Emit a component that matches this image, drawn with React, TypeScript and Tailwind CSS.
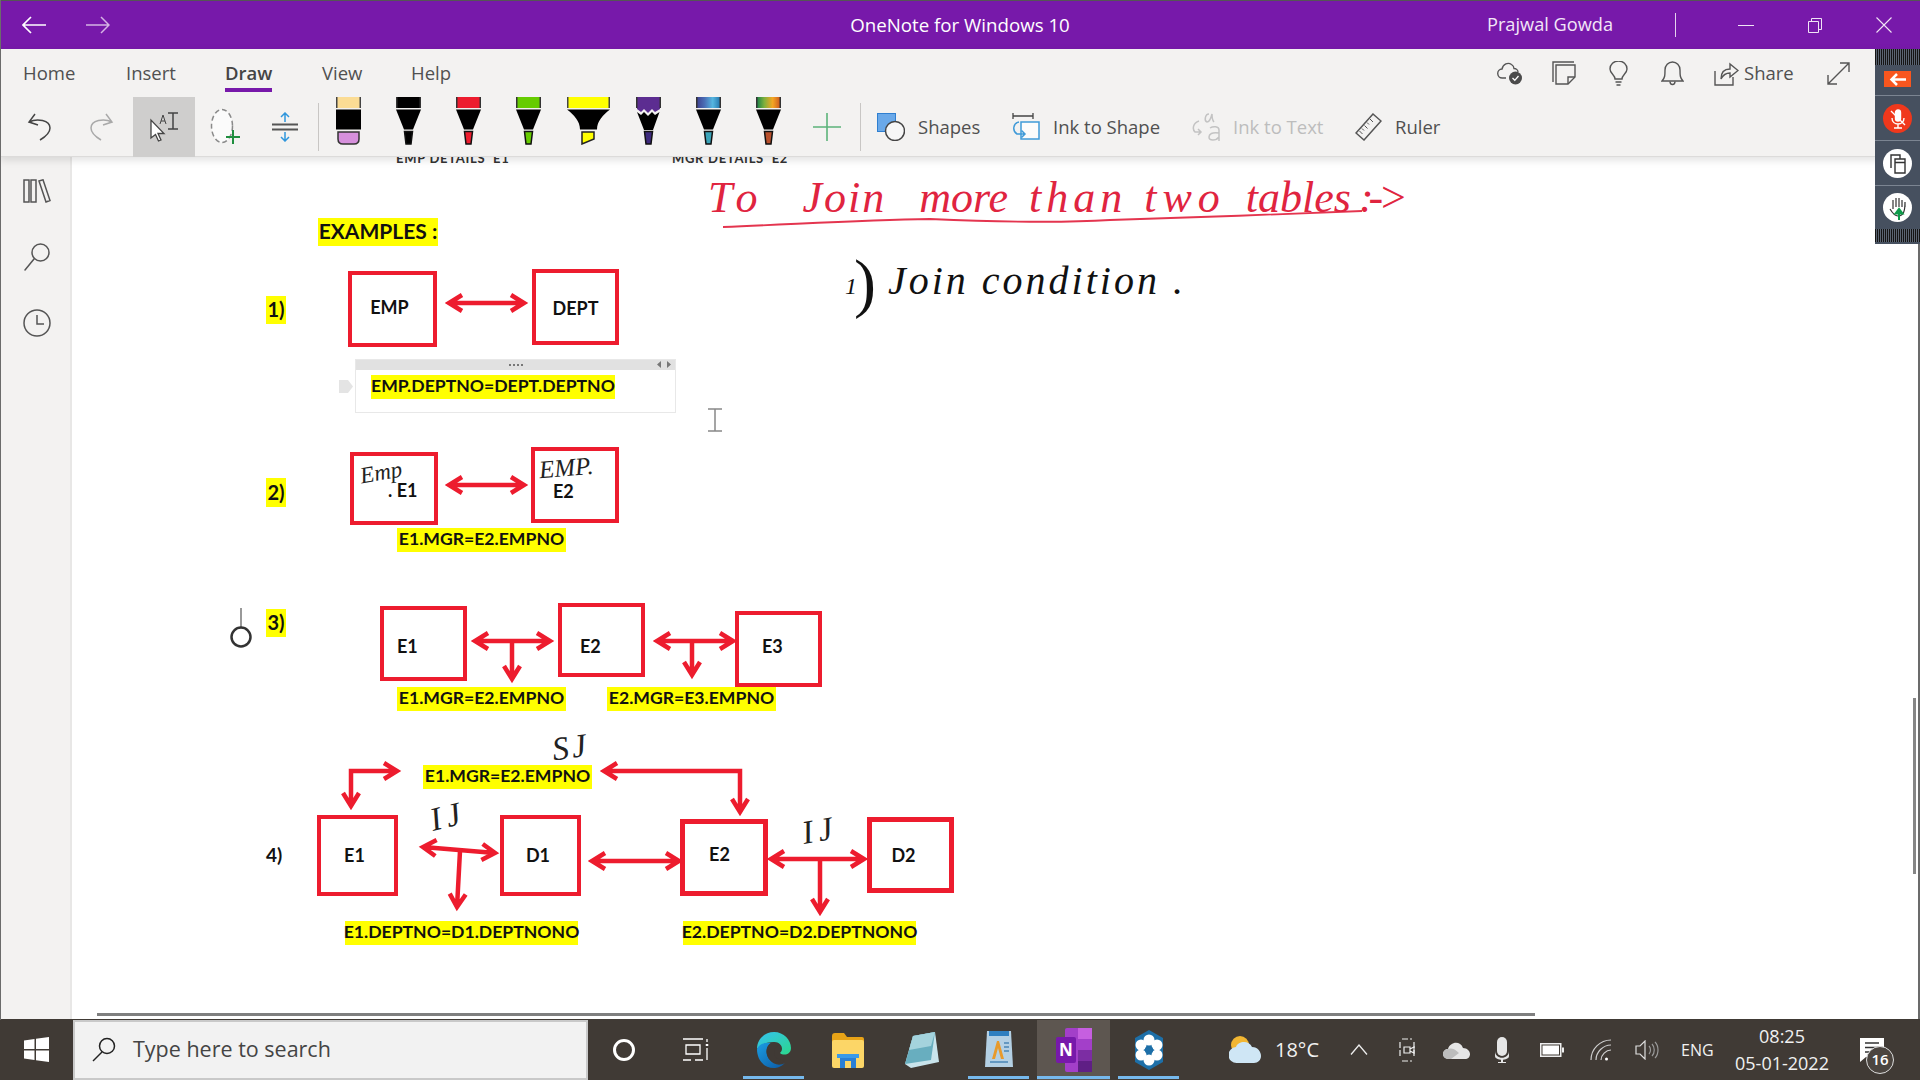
import React from 'react';

const RED = '#ed1c2e';

type Pt = [number, number];

// arrow head path at tip, pointing away from "from"
const head = (from: Pt, tip: Pt, size = 13, spread = 8) => {
  const dx = tip[0] - from[0];
  const dy = tip[1] - from[1];
  const len = Math.hypot(dx, dy) || 1;
  const ux = dx / len;
  const uy = dy / len;
  const bx = tip[0] - ux * size;
  const by = tip[1] - uy * size;
  return `M${bx - uy * spread} ${by + ux * spread}L${tip[0]} ${tip[1]}L${bx + uy * spread} ${by - ux * spread}`;
};

const both = (a: Pt, b: Pt) => `M${a[0]} ${a[1]}L${b[0]} ${b[1]}${head(b, a)}${head(a, b)}`;
const one = (a: Pt, b: Pt) => `M${a[0]} ${a[1]}L${b[0]} ${b[1]}${head(a, b)}`;

const ARROWS = [
  both([449, 303], [524, 303]),
  both([449, 485], [524, 485]),
  both([475, 641], [550, 641]),
  one([512, 641], [512, 679]),
  both([657, 641], [733, 641]),
  one([692, 641], [692, 675]),
  `M397 771L351 771L351 806${head([351, 771], [397, 771])}${head([351, 771], [351, 806])}`,
  `M604 771L740 771L740 812${head([740, 771], [604, 771])}${head([740, 771], [740, 812])}`,
  both([423, 847], [495, 853]),
  one([460, 851], [457, 907]),
  both([592, 861], [679, 861]),
  both([771, 859], [864, 859]),
  one([820, 859], [820, 912]),
];

const Box: React.FC<{ className: string; children?: React.ReactNode }> = ({ className, children }) => (
  <div className={`absolute flex whitespace-pre border-solid border-[#ed1c2e] font-['Lato',sans-serif] text-[18px] font-bold text-[#111] ${className}`}>
    {children}
  </div>
);

const Hl: React.FC<{ className: string; children: React.ReactNode }> = ({ className, children }) => (
  <div className={`absolute flex h-[24px] items-center justify-center whitespace-nowrap bg-[#ffff00] pb-[2px] font-['Lato',sans-serif] text-[17.6px] font-bold text-[#111] ${className}`}>
    {children}
  </div>
);

const Ink: React.FC<{ className: string; children: React.ReactNode }> = ({ className, children }) => (
  <div className={`absolute whitespace-nowrap font-['Liberation_Serif',serif] italic leading-none ${className}`}>{children}</div>
);

const Pen: React.FC<{ top: string; tip: string; id?: string; stops?: string[]; jag?: boolean }> = ({ top, tip, id, stops, jag }) => (
  <svg width="25" height="48" viewBox="0 0 25 48">
    {id && stops && (
      <defs>
        <linearGradient id={id}>
          {stops.map((c, i) => (
            <stop key={c} offset={i / (stops.length - 1)} stopColor={c} />
          ))}
        </linearGradient>
      </defs>
    )}
    <rect x="0" y="0" width="25" height="11" fill={id ? `url(#${id})` : top} />
    <rect x="0" y="0" width="1.5" height="11" fill="#333" />
    <rect x="23.5" y="0" width="1.5" height="11" fill="#333" />
    {jag ? (
      <>
        <path d="M1 11L1 12L5 15L8 12L12 16L16 12L19 15L24 12L24 11Z" fill={top} />
        <path d="M1 15L5 18L8 15L12 19L16 15L19 18L23.5 15L17 33L8 33Z" fill="#000" />
      </>
    ) : (
      <path d="M0 12.5L25 12.5L17 32.500L8 32.500Z" fill="#000" />
    )}
    <path d="M8.500 34.500L16.500 34.500L15 47L10 47Z" fill={tip} stroke="#111" strokeWidth="1.500" />
  </svg>
);

const ToolSlot: React.FC<{ children: React.ReactNode; className?: string }> = ({ children, className }) => (
  <div className={`flex h-[60px] items-center justify-center ${className ?? 'w-[62px]'}`}>{children}</div>
);

const ToolLabel: React.FC<{ icon: React.ReactNode; label: string; className: string; muted?: boolean }> = ({ icon, label, className, muted }) => (
  <div className={`flex h-[60px] items-center ${className}`}>
    {icon}
    <span className={`whitespace-nowrap text-[18.5px] ${muted ? 'text-[#bdbdbd]' : 'text-[#505050]'}`}>{label}</span>
  </div>
);

const Slot: React.FC<{ className: string; active?: boolean; children: React.ReactNode }> = ({ className, active, children }) => (
  <div className={`relative flex h-[60px] items-center justify-center ${className}`}>
    {children}
    {active && <div className="absolute bottom-[1px] left-0 h-[3px] w-full bg-[#76b9ed]" />}
  </div>
);

export default function App() {
  return (
    <div className="relative flex h-[1080px] w-[1920px] flex-col overflow-hidden bg-white font-['Open_Sans',sans-serif]">
      <div className="absolute left-0 top-0 z-30 h-[1020px] w-px bg-[#6b6b6b]" />

      {/* Title bar */}
      <div className="flex h-[49px] shrink-0 items-center border-t border-[#555] bg-[#7719aa] pl-[22px] text-white">
        <svg width="24" height="20" viewBox="0 0 24 20" fill="none" stroke="#fff" strokeWidth="1.700">
          <path d="M24 10H1M9 2L1 10L9 18" />
        </svg>
        <svg className="ml-[40px]" width="24" height="20" viewBox="0 0 24 20" fill="none" stroke="#d5b4e4" strokeWidth="1.500">
          <path d="M0 10H23M15 2L23 10L15 18" />
        </svg>
        <div className="ml-[740px] w-[220px] whitespace-nowrap text-center text-[18.7px]">OneNote for Windows 10</div>
        <div className="ml-[417px] w-[126px] whitespace-nowrap text-center text-[18.2px] text-[#f2e6f7]">Prajwal Gowda</div>
        <div className="ml-[62px] h-[24px] w-px bg-[#e5d3ee]" />
        <div className="ml-[62px] h-px w-[16px] bg-[#f0e4f5]" />
        <svg className="ml-[54px]" width="14" height="15" viewBox="0 0 14 15" fill="none" stroke="#f0e4f5">
          <path d="M0.500 3.500H10.500V14.500H0.500ZM3.500 3.500V0.500H13.500V11.500H10.500" />
        </svg>
        <svg className="ml-[54px]" width="16" height="16" viewBox="0 0 16 16" fill="none" stroke="#f0e4f5" strokeWidth="1.100">
          <path d="M0.500 0.500L15.500 15.500M15.500 0.500L0.500 15.500" />
        </svg>
      </div>

      {/* Ribbon */}
      <div className="relative z-20 h-[108px] shrink-0 border-b border-[#dcdbda] bg-[#f3f2f1] shadow-[0_3px_8px_rgba(0,0,0,0.12)]">
        <div className="flex h-[48px] items-center text-[18.5px] text-[#505050]">
          <span className="ml-[23px] w-[52px]">Home</span>
          <span className="ml-[51px] w-[48px]">Insert</span>
          <span className="relative ml-[51px] w-[48px] font-semibold text-[#444]">
            Draw
            <span className="absolute left-0 top-[29px] h-[4px] w-[47px] bg-[#7719aa]" />
          </span>
          <span className="ml-[49px] w-[41px]">View</span>
          <span className="ml-[48px] w-[40px]">Help</span>
          <div className="ml-auto flex items-center">
            <svg width="26" height="24" viewBox="0 0 26 24" fill="none" stroke="#555" strokeWidth="1.400">
              <path d="M9 17H5.500A4.500 4.500 0 0 1 5 8C6 3 11 1 14.500 3.500C16 4.500 17 6 17 7.500C19 7.500 21 9 21 11" />
              <circle cx="18.500" cy="17" r="6.500" fill="#4b4b4b" stroke="none" />
              <path d="M15.500 17L17.800 19.300L21.500 15" stroke="#fff" strokeWidth="1.300" />
            </svg>
            <svg className="ml-[29px]" width="24" height="24" viewBox="0 0 24 24" fill="none" stroke="#555" strokeWidth="1.400">
              <path d="M1 21V1H22" />
              <path d="M4 4H23V16L16 23H4Z" />
              <path d="M23 16H16V23" />
            </svg>
            <svg className="ml-[33px]" width="19" height="25" viewBox="0 0 19 25" fill="none" stroke="#555" strokeWidth="1.400">
              <path d="M6 18C6 14 1 12.500 1 8A8.500 8 0 0 1 18 8C18 12.500 13 14 13 18Z" />
              <path d="M6.500 21H12.500M7.500 24H11.500" />
            </svg>
            <svg className="ml-[33px]" width="23" height="25" viewBox="0 0 23 25" fill="none" stroke="#555" strokeWidth="1.400">
              <path d="M1 20C4 17 4 14 4 9A7.500 8 0 0 1 19 9C19 14 19 17 22 20Z" />
              <path d="M9 20.500A2.500 3 0 0 0 14 20.500" />
            </svg>
            <svg className="ml-[30px]" width="25" height="25" viewBox="0 0 25 25" fill="none" stroke="#555" strokeWidth="1.400">
              <path d="M1 10V24H19V16" />
              <path d="M7 18C7 11 11 8 16 8V3L24 9.500L16 16V12C12 12 9 14 7 18Z" />
            </svg>
            <span className="ml-[5px] w-[48px] text-[18.5px]">Share</span>
            <svg className="ml-[35px] mr-[70px]" width="23" height="23" viewBox="0 0 23 23" fill="none" stroke="#555" strokeWidth="1.400">
              <path d="M1 22L22 1M13 1H22V10M1 13V22H10" />
            </svg>
          </div>
        </div>

        <div className="flex h-[60px] items-start pl-[8px]">
          <ToolSlot>
            <svg width="25" height="28" viewBox="0 0 25 28" fill="none" stroke="#444" strokeWidth="1.500">
              <path d="M8 1L2 9L11 12M2 9C10 5 23 7 23 15C23 20 18 24 13 27" />
            </svg>
          </ToolSlot>
          <ToolSlot>
            <svg width="25" height="28" viewBox="0 0 25 28" fill="none" stroke="#a9a9a9" strokeWidth="1.500">
              <path d="M17 1L23 9L14 12M23 9C15 5 2 7 2 15C2 20 7 24 12 27" />
            </svg>
          </ToolSlot>
          <ToolSlot className="ml-px w-[62px] bg-[#cfcecd]">
            <svg width="32" height="30" viewBox="0 0 32 30" fill="none" stroke="#444" strokeWidth="1.300">
              <path d="M3 8V26L7.500 22.500L10.500 29L13 28L10 21.500H16Z" fill="#fff" />
              <path d="M12 12L15 3L18 12M13 9H17" strokeWidth="1" />
              <path d="M20 1H30M25 1V17M20 17H30" strokeWidth="1.500" />
            </svg>
          </ToolSlot>
          <ToolSlot className="w-[60px]">
            <svg width="30" height="38" viewBox="0 0 30 38" fill="none">
              <ellipse cx="12" cy="18" rx="10.500" ry="16.500" stroke="#8a8a8a" strokeWidth="1.500" strokeDasharray="5 3" fill="#fbfbfb" />
              <path d="M23 22V36M16 29H30" stroke="#1e8e3e" strokeWidth="2" />
            </svg>
          </ToolSlot>
          <ToolSlot className="w-[60px]">
            <svg width="28" height="30" viewBox="0 0 28 30" fill="none">
              <path d="M1 12.500H27M1 17.500H27" stroke="#555" strokeWidth="2" />
              <path d="M14 10V1M10 5L14 1L18 5M14 20V29M10 25L14 29L18 25" stroke="#2f96dc" strokeWidth="1.500" />
            </svg>
          </ToolSlot>

          <div className="ml-[3px] mt-[6px] h-[48px] w-px bg-[#c8c6c4]" />
          <div className="-ml-px flex w-[480px]">
            <ToolSlot className="w-[60px] !items-start">
              <svg width="25" height="48" viewBox="0 0 25 48">
                <rect width="25" height="11" fill="#fbdc94" />
                <rect width="1.500" height="11" fill="#444" />
                <rect x="23.500" width="1.500" height="11" fill="#444" />
                <rect y="12.500" width="25" height="20" fill="#000" />
                <path d="M2 35H23V42Q23 47 18 47H7Q2 47 2 42Z" fill="#d690dc" stroke="#333" strokeWidth="1.500" />
              </svg>
            </ToolSlot>
            <ToolSlot className="w-[60px] !items-start"><Pen top="#000" tip="#000" /></ToolSlot>
            <ToolSlot className="w-[60px] !items-start"><Pen top="#ed1c2e" tip="#ed1c2e" /></ToolSlot>
            <ToolSlot className="w-[60px] !items-start"><Pen top="#66cc00" tip="#66cc00" /></ToolSlot>
            <ToolSlot className="w-[60px] !items-start">
              <svg width="43" height="48" viewBox="0 0 43 48">
                <rect width="43" height="11" fill="#ffff00" />
                <rect width="1.500" height="11" fill="#444" />
                <rect x="41.500" width="1.500" height="11" fill="#444" />
                <path d="M0 12.500H43C36 18 30 24 30 32.500H13C13 24 7 18 0 12.500Z" fill="#000" />
                <path d="M15 35H27V42L15 47Z" fill="#ffff00" stroke="#222" strokeWidth="1.500" />
              </svg>
            </ToolSlot>
            <ToolSlot className="w-[60px] !items-start"><Pen top="#5c2d91" tip="#3d2a7d" jag /></ToolSlot>
            <ToolSlot className="w-[60px] !items-start">
              <Pen top="" tip="#3aa3b8" id="galaxy" stops={['#3c3c8c', '#4a6cb4', '#55b6e0', '#1f6fa8']} />
            </ToolSlot>
            <ToolSlot className="w-[60px] !items-start">
              <Pen top="" tip="#b8502c" id="rainbow" stops={['#0c7c4a', '#7fb03c', '#f5a623', '#c8501e']} />
            </ToolSlot>
          </div>
          <ToolSlot className="w-[58px]">
            <svg width="28" height="28" viewBox="0 0 28 28" stroke="#5cb37a" strokeWidth="1.600">
              <path d="M14 0V28M0 14H28" />
            </svg>
          </ToolSlot>
          <div className="ml-[4px] mt-[6px] h-[48px] w-px bg-[#c8c6c4]" />

          <ToolLabel
            className="ml-[16px] w-[135px]"
            label="Shapes"
            icon={
              <svg className="mr-[13px]" width="28" height="28" viewBox="0 0 28 28">
                <rect x="0.500" y="0.500" width="18" height="18" fill="#6aa9e9" stroke="#2f7fd0" />
                <circle cx="18" cy="18" r="9.500" fill="#f7f7f7" stroke="#444" strokeWidth="1.500" />
              </svg>
            }
          />
          <ToolLabel
            className="w-[180px]"
            label="Ink to Shape"
            icon={
              <svg className="mr-[13px]" width="28" height="28" viewBox="0 0 28 28" fill="none">
                <path d="M1 0V6M1 3H21M21 0V6" stroke="#444" strokeWidth="1.300" />
                <rect x="9" y="9" width="18" height="17" fill="#fbfbfb" stroke="#3f9ad8" strokeWidth="1.500" />
                <path d="M7 9C1 10 0 18 5 21H13M9.500 17.500L13 21L9.500 24.500" stroke="#3f9ad8" strokeWidth="1.500" />
              </svg>
            }
          />
          <ToolLabel
            muted
            className="w-[163px]"
            label="Ink to Text"
            icon={
              <svg className="mr-[11px]" width="30" height="30" viewBox="0 0 30 30" fill="none" stroke="#c3c3c3" strokeWidth="1.500">
                <path d="M17 2C13 2 12 9 15 10C17 10 19 6 20 2C20 5 20 8 22 10" />
                <path d="M7 9C1 11 0 17 3 20H9M6 17L9 20L6 23" />
                <path d="M18 16C21 14 27 14 27 18V29M27 21C20 20 17 22 17 25C17 29 24 29 27 25" />
              </svg>
            }
          />
          <ToolLabel
            className="w-[100px]"
            label="Ruler"
            icon={
              <svg className="mr-[13px]" width="27" height="28" viewBox="0 0 27 28" fill="none" stroke="#555" strokeWidth="1.500">
                <path d="M18 1L26 8L9 27L1 20Z" />
                <path d="M15 6L18 9M12 9.500L14 11.500M9.500 12.500L12.500 15.500M7 15.500L9 17.500M4.500 18L7.500 21" strokeWidth="1" />
              </svg>
            }
          />
        </div>
      </div>

      {/* Body */}
      <div className="flex min-h-0 flex-1">
        <div className="flex w-[72px] shrink-0 flex-col items-center border-r-2 border-[#e8e7e6] bg-[#f3f2f1] pl-[3px] pt-[22px]">
          <svg width="28" height="24" viewBox="0 0 28 24" fill="none" stroke="#555" strokeWidth="1.500">
            <path d="M1 1H6V23H1ZM8 1H13V23H8ZM16 2L20 0.800L27 21.500L23 23Z" />
          </svg>
          <svg className="mt-[40px]" width="26" height="28" viewBox="0 0 26 28" fill="none" stroke="#555" strokeWidth="1.500">
            <circle cx="16.500" cy="9.500" r="8.500" />
            <path d="M10 16L1 27" strokeLinecap="round" />
          </svg>
          <svg className="mt-[38px]" width="28" height="28" viewBox="0 0 28 28" fill="none" stroke="#555" strokeWidth="1.500">
            <circle cx="14" cy="14" r="13" />
            <path d="M14 6V15H21" />
          </svg>
        </div>

        {/* Notebook canvas */}
        <div className="relative flex-1 overflow-hidden bg-white">
          <div className="absolute left-[324px] top-[-8px] whitespace-pre font-['Lato',sans-serif] text-[13px] font-bold tracking-[0.7px] text-[#333]">EMP DETAILS  E1</div>
          <div className="absolute left-[600px] top-[-8px] whitespace-pre font-['Lato',sans-serif] text-[13px] font-bold tracking-[0.7px] text-[#333]">MGR DETAILS  E2</div>

          <svg className="absolute inset-0 h-full w-full" viewBox="72 157 1848 862" fill="none">
            {ARROWS.map((d) => (
              <path key={d} d={d} stroke={RED} strokeWidth="4.500" />
            ))}
            <path d="M723 227C800 224 860 220 930 219C1000 222 1060 223 1110 220C1180 218 1290 214 1362 211" stroke="#e4354f" strokeWidth="1.800" />
            <path d="M241 608V627" stroke="#777" strokeWidth="1.500" />
            <circle cx="241" cy="637" r="9.500" stroke="#333" strokeWidth="2.500" />
            <path d="M708 409H722M708 431H722M715 409V431" stroke="#888" strokeWidth="1.500" />
            <path d="M339 380H348L353 386.500L348 393H339Z" fill="#e4e4e4" />
          </svg>

          <Hl className="left-[246px] top-[61px] !h-[28px] w-[120px] !text-[21px]">EXAMPLES :</Hl>
          <Hl className="left-[194px] top-[139px] !h-[28px] w-[20px] !text-[20px]">1)</Hl>
          <Hl className="left-[194px] top-[321px] !h-[29px] w-[20px] !text-[20px]">2)</Hl>
          <Hl className="left-[194px] top-[452px] !h-[28px] w-[20px] !text-[20px]">3)</Hl>
          <div className="absolute left-[194px] top-[684px] font-['Lato',sans-serif] text-[19px] font-bold leading-[28px] text-[#111]">4)</div>

          <Box className="left-[276px] top-[114px] h-[76px] w-[89px] items-center justify-center border-[4px] pb-[3px] pr-[6px]">EMP</Box>
          <Box className="left-[460px] top-[112px] h-[76px] w-[87px] items-center justify-center border-[4px] pt-[2px]">DEPT</Box>

          <div className="absolute left-[283px] top-[202px] h-[54px] w-[321px] border border-[#e8e8e8]">
            <div className="flex h-[10px] items-center justify-center bg-[#e1e1e1]">
              <div className="h-[2px] w-[14px] bg-[repeating-linear-gradient(90deg,#777_0,#777_2px,transparent_2px,transparent_4px)]" />
            </div>
            <svg className="absolute right-[4px] top-[1px]" width="14" height="7" viewBox="0 0 14 7" fill="#777">
              <path d="M4 0V7L0 3.500ZM10 0V7L14 3.500Z" />
            </svg>
          </div>
          <Hl className="left-[299px] top-[218px] w-[244px]">EMP.DEPTNO=DEPT.DEPTNO</Hl>

          <Box className="left-[278px] top-[295px] h-[73px] w-[88px] border-[4px] pl-[34px] pt-[21px]">. E1</Box>
          <Box className="left-[459px] top-[290px] h-[76px] w-[88px] border-[4px] pl-[18px] pt-[27px]">E2</Box>
          <Ink className="left-[288px] top-[304px] rotate-[-10deg] text-[23px] text-[#222]">Emp</Ink>
          <Ink className="left-[467px] top-[298px] rotate-[-5deg] text-[25px] text-[#222]">EMP.</Ink>
          <Hl className="left-[325px] top-[371px] w-[169px]">E1.MGR=E2.EMPNO</Hl>

          <Box className="left-[308px] top-[449px] h-[75px] w-[87px] border-[4px] pl-[13px] pt-[23px]">E1</Box>
          <Box className="left-[486px] top-[446px] h-[74px] w-[87px] border-[4px] pl-[18px] pt-[26px]">E2</Box>
          <Box className="left-[663px] top-[454px] h-[76px] w-[87px] border-[4px] pl-[23px] pt-[18px]">E3</Box>
          <Hl className="left-[325px] top-[530px] w-[169px]">E1.MGR=E2.EMPNO</Hl>
          <Hl className="left-[535px] top-[530px] w-[169px]">E2.MGR=E3.EMPNO</Hl>

          <Ink className="left-[480px] top-[574px] rotate-[-8deg] text-[33px] tracking-[3px] text-[#222]">SJ</Ink>
          <Hl className="left-[351px] top-[608px] w-[169px]">E1.MGR=E2.EMPNO</Hl>
          <Box className="left-[245px] top-[658px] h-[81px] w-[81px] items-center justify-center border-[4px] pr-[6px]">E1</Box>
          <Box className="left-[428px] top-[658px] h-[81px] w-[81px] items-center justify-center border-[4px] pr-[5px]">D1</Box>
          <Box className="left-[608px] top-[662px] h-[77px] w-[88px] items-center justify-center border-[5px] pb-[6px] pr-[9px]">E2</Box>
          <Box className="left-[795px] top-[660px] h-[76px] w-[87px] items-center justify-center border-[5px] pr-[14px]">D2</Box>
          <Ink className="left-[358px] top-[643px] rotate-[-14deg] text-[33px] tracking-[5px] text-[#222]">IJ</Ink>
          <Ink className="left-[730px] top-[657px] rotate-[-10deg] text-[33px] tracking-[5px] text-[#222]">IJ</Ink>
          <Hl className="left-[273px] top-[764px] w-[233px]">E1.DEPTNO=D1.DEPTNONO</Hl>
          <Hl className="left-[611px] top-[764px] w-[233px]">E2.DEPTNO=D2.DEPTNONO</Hl>

          {/* Handwritten notes */}
          <Ink className="left-[636px] top-[19px] flex text-[44px] text-[#e0243f]">
            <span className="tracking-[7px]">To</span>
            <span className="ml-[38px] tracking-[2px]">Join</span>
            <span className="ml-[33px]">more</span>
            <span className="ml-[21px] tracking-[5px]">than</span>
            <span className="ml-[17px] tracking-[6px]">two</span>
            <span className="ml-[20px]">tables</span>
            <span className="ml-[8px] tracking-[-5px]">:-&gt;</span>
          </Ink>
          <Ink className="left-[773px] top-[117px] text-[24px] text-[#111]">1</Ink>
          <div className="absolute left-[782px] top-[93px] font-['Liberation_Serif',serif] text-[66px] font-light leading-none text-[#111]">)</div>
          <Ink className="left-[816px] top-[104px] text-[40px] tracking-[3px] text-[#111]">Join condition .</Ink>

          {/* Page scrollbars */}
          <div className="absolute left-[25px] top-[856px] h-[3px] w-[1438px] bg-[#7f7f7f]" />
          <div className="absolute left-[1841px] top-[541px] h-[176px] w-[3px] bg-[#868686]" />
          <div className="absolute right-0 top-0 h-full w-[2px] bg-[#6b6b6b]" />
        </div>
      </div>

      {/* Recorder widget */}
      <div className="absolute right-0 top-[49px] z-30 flex h-[195px] w-[45px] flex-col items-center bg-[#46505f]">
        <div className="h-[16px] w-full shrink-0 bg-[repeating-linear-gradient(90deg,#141414_0,#141414_1px,#5a6472_1px,#5a6472_2px)]" />
        <div className="mt-[6px] flex h-[16px] w-[27px] items-center justify-center bg-[#f8561e]">
          <svg width="17" height="13" viewBox="0 0 17 13" fill="none" stroke="#fff" strokeWidth="2.500">
            <path d="M17 6.500H3M8 1L2.500 6.500L8 12" />
          </svg>
        </div>
        <div className="mt-[8px] h-px w-full bg-[#7c8592]" />
        <div className="mt-[8px] flex h-[29px] w-[29px] items-center justify-center rounded-full bg-[#f0381c]">
          <svg width="16" height="20" viewBox="0 0 16 20" fill="none" stroke="#fff" strokeWidth="1.400">
            <rect x="5.500" y="1" width="5" height="11" rx="2.500" fill="#fff" />
            <path d="M2 9C2 17 14 17 14 9M8 15V19M4 19H12M1 2L15 16" />
          </svg>
        </div>
        <div className="mt-[7px] h-px w-full bg-[#7c8592]" />
        <div className="mt-[8px] flex h-[29px] w-[29px] items-center justify-center rounded-full bg-white">
          <svg width="16" height="20" viewBox="0 0 16 20" fill="none" stroke="#333" strokeWidth="1.400">
            <path d="M1 14V1H10V5M5 5H15V19H5ZM5 8.500H15" />
          </svg>
        </div>
        <div className="mt-[7px] h-px w-full bg-[#7c8592]" />
        <div className="mt-[7px] flex h-[29px] w-[29px] items-center justify-center rounded-full bg-white">
          <svg width="18" height="24" viewBox="0 0 18 24" fill="none">
            <path d="M4 13V4M7 11V2M10 11V2M13 11V4M16 11V6C16 14 15 20 9 20C6 20 4 18 1 13" stroke="#333" strokeWidth="1.200" />
            <path d="M10 24V15M6.500 17.500L10 13L13.500 17.500Z" stroke="#0d9b4a" strokeWidth="2" fill="#0d9b4a" />
          </svg>
        </div>
        <div className="mt-[7px] h-[13px] w-full shrink-0 bg-[repeating-linear-gradient(90deg,#141414_0,#141414_1px,#5a6472_1px,#5a6472_2px)]" />
      </div>

      {/* Taskbar */}
      <div className="flex h-[61px] shrink-0 items-center bg-[#403a35] text-[#f1f1f1]">
        <div className="flex h-[60px] w-[73px] items-center justify-center">
          <svg width="25" height="25" viewBox="0 0 25 25" fill="#fff">
            <path d="M0 3.500L10.500 2V12H0ZM12 1.800L25 0V12H12ZM0 13.500H10.500V23L0 21.500ZM12 13.500H25V25L12 23.200Z" />
          </svg>
        </div>
        <div className="flex h-[60px] w-[515px] items-center border-2 border-[#c9c9c9] bg-[#f2f2f2] pl-[17px] text-[21.5px] text-[#444]">
          <svg width="24" height="25" viewBox="0 0 24 25" fill="none" stroke="#222" strokeWidth="1.500">
            <circle cx="15" cy="9" r="7.500" />
            <path d="M10 15L1 24" />
          </svg>
          <span className="ml-[17px] whitespace-nowrap">Type here to search</span>
        </div>

        <Slot className="w-[72px]">
          <div className="h-[22px] w-[22px] rounded-full border-[3px] border-white" />
        </Slot>
        <Slot className="w-[72px]">
          <svg width="26" height="24" viewBox="0 0 26 24" fill="none" stroke="#fff" strokeWidth="1.300">
            <path d="M0 1H20M3 7H17V16H3ZM0 22H8M12 22H20M24 1V4M24 10V22" />
            <path d="M24 6V8" strokeWidth="2.500" />
          </svg>
        </Slot>
        <Slot active className="ml-[11px] w-[61px]">
          <svg width="36" height="36" viewBox="0 0 36 36">
            <defs>
              <linearGradient id="edgeA" x1="0" y1="0" x2="1" y2="1">
                <stop offset="0" stopColor="#35c1f1" />
                <stop offset="1" stopColor="#2bd88b" />
              </linearGradient>
              <linearGradient id="edgeB" x1="0" y1="0" x2="1" y2="1">
                <stop offset="0" stopColor="#1b9de2" />
                <stop offset="1" stopColor="#0c59a4" />
              </linearGradient>
            </defs>
            <path d="M1 17C1 7 9 0 18 0C28 0 35 8 35 16C35 23 27 24 24 21C28 18 26 10 18 10C9 10 3 14 1 17Z" fill="url(#edgeA)" />
            <path d="M1 17C3 12 9 10 15 11C10 14 9 21 13 27C17 33 24 34 29 31C25 35 21 36 18 36C8 36 1 28 1 17Z" fill="url(#edgeB)" />
            <path d="M15 11C10 14 9 21 13 27C17 31 24 32 29 29C25 28 18 27 18 20C18 16 21 14 24 13C21 10 18 10 15 11Z" fill="#403a35" />
          </svg>
        </Slot>
        <Slot className="ml-[13px] w-[61px]">
          <svg width="32" height="36" viewBox="0 0 32 36">
            <path d="M0 4Q0 1 3 1H12L15 5H30Q32 5 32 7V12H0Z" fill="#e8a317" />
            <rect y="8" width="32" height="28" rx="2" fill="#fcd667" />
            <path d="M8 36V24H24V36H19V29H13V36Z" fill="#2a7fd4" />
            <rect x="5" y="22" width="22" height="4" fill="#3a9ae8" />
          </svg>
        </Slot>
        <Slot className="ml-[13px] w-[61px]">
          <svg width="34" height="36" viewBox="0 0 34 36">
            <path d="M8 4L30 0L34 30L6 36L0 32Z" fill="#c9e4ec" />
            <path d="M8 4L30 0L26 28L0 32Z" fill="#68aebf" />
            <path d="M8 4L30 0L26 14L4 18Z" fill="#a4d3dd" />
          </svg>
        </Slot>
        <Slot active className="ml-[16px] w-[61px]">
          <svg width="30" height="38" viewBox="0 0 30 38">
            <path d="M3 0H27L29 36H1Z" fill="#b4d0e4" />
            <path d="M5 0H25V5H5Z" fill="#2f7fc0" />
            <path d="M8 28L13 10H15L20 28H17L14 17L11 28Z" fill="#e89a2c" />
            <path d="M20 12H25M20 16H25M20 20H25M6 31H24" stroke="#4a85b5" strokeWidth="1.500" />
          </svg>
        </Slot>
        <Slot active className="ml-[8px] w-[73px] bg-[#5d5650]">
          <svg width="36" height="44" viewBox="0 0 36 44">
            <rect x="9" y="0" width="27" height="44" rx="2" fill="#a33fc9" />
            <rect x="22" y="0" width="14" height="11" fill="#c65fe0" />
            <rect x="22" y="22" width="14" height="11" fill="#7c2da3" />
            <rect x="22" y="33" width="14" height="11" fill="#5f1f85" />
            <rect x="0" y="9" width="20" height="26" rx="2" fill="#7719aa" />
            <text x="10" y="28" textAnchor="middle" fontSize="17" fontWeight="700" fill="#fff" fontFamily="Open Sans">N</text>
          </svg>
        </Slot>
        <Slot active className="ml-[8px] w-[61px]">
          <svg width="32" height="40" viewBox="0 0 32 40">
            <path d="M16 0L30 8V32L16 40L2 32V8Z" fill="#1d6fa8" />
            <g fill="#fff">
              <circle cx="16" cy="10" r="5.500" />
              <circle cx="16" cy="30" r="5.500" />
              <circle cx="8" cy="15" r="5.500" />
              <circle cx="24" cy="15" r="5.500" />
              <circle cx="8" cy="25" r="5.500" />
              <circle cx="24" cy="25" r="5.500" />
            </g>
            <circle cx="16" cy="20" r="4" fill="#1d6fa8" />
          </svg>
        </Slot>

        <div className="ml-[46px] flex w-[40px] justify-center">
          <svg width="32" height="30" viewBox="0 0 32 30">
            <circle cx="11" cy="10" r="9" fill="#f2b632" />
            <path d="M8 28A8 8 0 0 1 7 12C9 6 20 5 23 12C29 12 32 17 32 21C32 25 29 28 25 28Z" fill="#cfe6f5" />
          </svg>
        </div>
        <span className="ml-[10px] w-[43px] whitespace-nowrap text-[20px]">18°C</span>
        <div className="ml-[26px] flex w-[30px] justify-center">
          <svg width="18" height="11" viewBox="0 0 18 11" fill="none" stroke="#eee" strokeWidth="1.300">
            <path d="M1 10.500L9 1L17 10.500" />
          </svg>
        </div>
        <div className="ml-[19px] flex w-[30px] justify-center">
          <svg width="18" height="24" viewBox="0 0 18 24" fill="none" stroke="#eee" strokeWidth="1.200">
            <path d="M3 1H13M3 23H13M1 4V20M15 4V20" strokeDasharray="6 2" />
            <path d="M5 9H11V15H5ZM11 11L15 9V15L11 13" />
          </svg>
        </div>
        <div className="ml-[16px] flex w-[34px] justify-center">
          <svg width="27" height="18" viewBox="0 0 27 18">
            <path d="M5 18A5 5 0 0 1 5 8C7 1 17 -1 20 7C24 7 27 10 27 13C27 16 25 18 22 18Z" fill="#e6e6e6" />
            <path d="M5 8C10 6 14 10 16 12L8 18H5A5 5 0 0 1 5 8Z" fill="#bdbdbd" />
          </svg>
        </div>
        <div className="ml-[19px] flex w-[20px] justify-center">
          <svg width="14" height="26" viewBox="0 0 14 26" fill="#e6e6e6">
            <rect x="2" y="0" width="10" height="19" rx="5" />
            <path d="M0 14C0 23 14 23 14 14V19C14 24 0 24 0 19ZM6 21H8V26H6ZM3 25H11V26H3Z" />
          </svg>
        </div>
        <div className="ml-[25px] flex w-[30px] justify-center">
          <svg width="24" height="14" viewBox="0 0 24 14">
            <rect x="0.750" y="0.750" width="20" height="12.500" fill="none" stroke="#eee" strokeWidth="1.500" />
            <rect x="2.500" y="2.500" width="16.500" height="9" fill="#fff" />
            <rect x="22" y="4.500" width="2" height="5" fill="#eee" />
          </svg>
        </div>
        <div className="ml-[19px] flex w-[30px] justify-center">
          <svg width="22" height="22" viewBox="0 0 22 22" fill="none" stroke="#cfcfcf" strokeWidth="1.200">
            <path d="M1 21C1 10 10 1 21 1M6 21C6 13 13 6 21 6M11 21C11 16 16 11 21 11" />
            <circle cx="16.500" cy="20" r="1.500" fill="#fff" stroke="none" />
          </svg>
        </div>
        <div className="ml-[16px] flex w-[30px] justify-center">
          <svg width="24" height="20" viewBox="0 0 24 20" fill="none" stroke="#dedede" strokeWidth="1.200">
            <path d="M1 6H5L10 1V19L5 14H1Z" />
            <path d="M14 6C16 8 16 12 14 14M17 4C20 7 20 13 17 16M20 2C24 6 24 14 20 18" stroke="#9a9a9a" />
          </svg>
        </div>
        <span className="ml-[19px] w-[35px] whitespace-nowrap text-[16px]">ENG</span>
        <div className="ml-[16px] flex w-[100px] flex-col items-center text-[18px] leading-[27px]">
          <span>08:25</span>
          <span className="whitespace-nowrap">05-01-2022</span>
        </div>
        <div className="relative ml-[17px] flex h-[60px] w-[40px]">
          <svg className="absolute left-[11px] top-[18px]" width="24" height="24" viewBox="0 0 24 24">
            <path d="M0 0H24V19H6L0 24Z" fill="#fff" />
            <path d="M5 5H19M5 9.500H19M5 14H19" stroke="#333" strokeWidth="1.500" />
          </svg>
          <div className="absolute left-[17px] top-[26px] flex h-[28px] w-[28px] items-center justify-center rounded-full border border-[#ddd] bg-[#4b4540] text-[15px] font-semibold text-white">16</div>
        </div>
      </div>
    </div>
  );
}
